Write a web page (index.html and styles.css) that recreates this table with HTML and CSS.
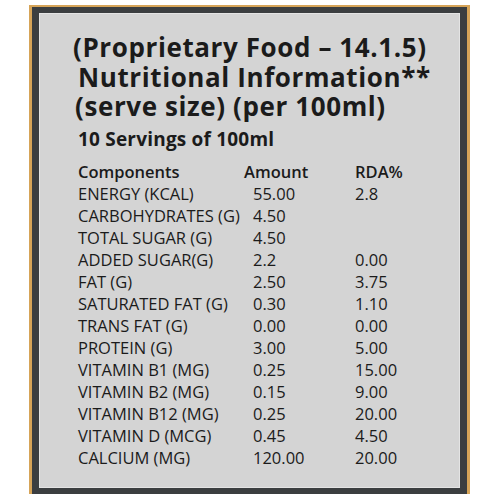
FILE: index.html
```html
<!DOCTYPE html>
<html>
<head>
<meta charset="utf-8">
<link rel="stylesheet" href="styles.css">
</head>
<body>
<div class="frame">
  <div class="panel">
    <div class="title">
      <div class="t1">(Proprietary Food – 14.1.5)</div>
      <div class="t2">Nutritional Information**</div>
      <div class="t3">(serve size) (per 100ml)</div>
    </div>
    <div class="sub">10 Servings of 100ml</div>
    <div class="table">
      <div class="hd">Components</div><div class="hd amt-h">Amount</div><div class="hd">RDA%</div>
      <div>ENERGY (KCAL)</div><div class="amt">55.00</div><div>2.8</div>
      <div>CARBOHYDRATES (G)</div><div class="amt">4.50</div><div></div>
      <div>TOTAL SUGAR (G)</div><div class="amt">4.50</div><div></div>
      <div>ADDED SUGAR(G)</div><div class="amt">2.2</div><div>0.00</div>
      <div>FAT (G)</div><div class="amt">2.50</div><div>3.75</div>
      <div>SATURATED FAT (G)</div><div class="amt">0.30</div><div>1.10</div>
      <div>TRANS FAT (G)</div><div class="amt">0.00</div><div>0.00</div>
      <div>PROTEIN (G)</div><div class="amt">3.00</div><div>5.00</div>
      <div>VITAMIN B1 (MG)</div><div class="amt">0.25</div><div>15.00</div>
      <div>VITAMIN B2 (MG)</div><div class="amt">0.15</div><div>9.00</div>
      <div>VITAMIN B12 (MG)</div><div class="amt">0.25</div><div>20.00</div>
      <div>VITAMIN D (MCG)</div><div class="amt">0.45</div><div>4.50</div>
      <div>CALCIUM (MG)</div><div class="amt">120.00</div><div>20.00</div>
    </div>
  </div>
</div>
</body>
</html>
```

FILE: styles.css
```css
html, body {
  margin: 0;
  padding: 0;
  background: #ffffff;
}
body {
  font-family: "Open Sans", "Noto Sans", sans-serif;
  color: #1b1b1b;
}
.frame {
  box-sizing: border-box;
  margin: 5px 0 0 29px;
  width: 441px;
  height: 489px;
  background: #3b3e40;
  border-top: 2px solid #d6a458;
  border-left: 3px solid #d6a458;
  border-right: 3px solid #d6a458;
  padding: 6px 7px 6px 7px;
}
.panel {
  box-sizing: border-box;
  height: 100%;
  background: #d4d4d4;
  border: 1px solid #e4e4e4;
  padding: 19px 0 0 38px;
}
.title {
  font-weight: 700;
  font-size: 26px;
  letter-spacing: 0.6px;
  line-height: 29.5px;
  margin-left: -5px;
}
.t2 {
  padding-left: 5px;
}
.t3 {
  padding-left: 2px;
}
.sub {
  font-weight: 700;
  font-size: 19px;
  letter-spacing: 0.2px;
  line-height: 24px;
  margin-top: 5px;
  padding-left: 0;
}
.table {
  margin-top: 10px;
  display: grid;
  grid-template-columns: 166px 111px 1fr;
  font-size: 16.5px;
  line-height: 22px;
}
.hd {
  font-weight: 600;
}
.amt {
  padding-left: 9px;
}
.amt-h {
  padding-left: 0;
}
```
